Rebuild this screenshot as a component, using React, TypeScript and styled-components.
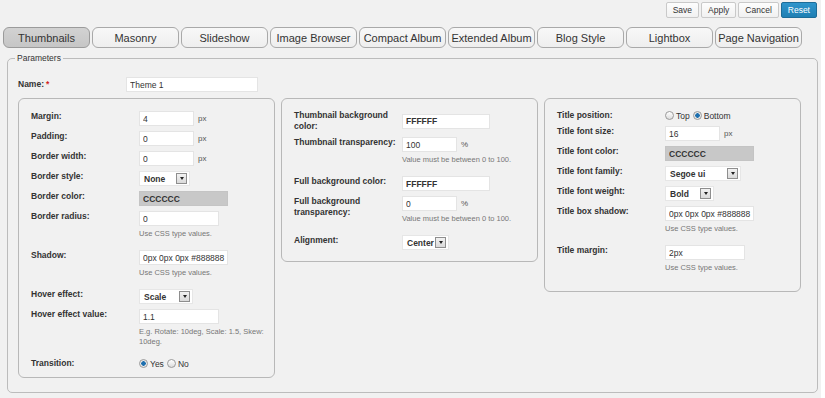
import React from 'react';
import styled, { createGlobalStyle } from 'styled-components';

const GlobalStyle = createGlobalStyle`
  body {
    margin: 0;
    background: #ffffff;
    font-family: "Liberation Sans", Arial, sans-serif;
  }
`;

const Page = styled.div`
  width: 821px;
  min-height: 398px;
  background: #f1f1f1;
  box-sizing: border-box;
  padding-top: 2px;
`;

const TopBar = styled.div`
  display: flex;
  justify-content: flex-end;
  gap: 2px;
  padding-right: 4px;
`;

const ActionButton = styled.button<{ $primary?: boolean }>`
  height: 16px;
  padding: 0 6px;
  font-family: "Liberation Sans", Arial, sans-serif;
  font-size: 8.5px;
  border-radius: 2px;
  color: ${(p) => (p.$primary ? '#ffffff' : '#333333')};
  border: 1px solid ${(p) => (p.$primary ? '#1c6c98' : '#c9c9c9')};
  background: ${(p) =>
    p.$primary ? 'linear-gradient(#2e95cc, #1f7fb3)' : 'linear-gradient(#fdfdfd, #f1f1f1)'};
`;

const TabRow = styled.div`
  display: flex;
  gap: 2px;
  padding-left: 3px;
  margin-top: 9px;
`;

const Tab = styled.div<{ $active?: boolean }>`
  width: 87px;
  height: 21px;
  box-sizing: border-box;
  display: flex;
  align-items: center;
  justify-content: center;
  font-size: 11px;
  color: #333333;
  white-space: nowrap;
  border: 1px solid ${(p) => (p.$active ? '#9b9b9b' : '#a9a9a9')};
  border-radius: 6px;
  background: ${(p) => (p.$active ? 'linear-gradient(#d2d2d2, #c6c6c6)' : 'linear-gradient(#f8f8f8, #eeeeee)')};
`;

const Params = styled.fieldset`
  margin: 5px 0 0 7px;
  width: 811px;
  box-sizing: border-box;
  border: 1px solid #bcbcbc;
  border-radius: 5px;
  padding: 14px 10px 14px 10px;
`;

const Legend = styled.legend`
  font-size: 8.5px;
  line-height: 10px;
  color: #333333;
  padding: 0 2px;
  margin-left: -3px;
`;

const NameRow = styled.div`
  display: grid;
  grid-template-columns: 108px auto;
  align-items: center;
`;

const Required = styled.span`
  color: #d21f1f;
  margin-left: 2px;
`;

const Panels = styled.div`
  display: flex;
  align-items: flex-start;
  gap: 6px;
  margin-top: 6px;
`;

const Panel = styled.div<{ $pad: string }>`
  width: 257px;
  box-sizing: border-box;
  border: 1px solid #b8b8b8;
  border-radius: 6px;
  padding: ${(p) => p.$pad};
  display: flex;
  flex-direction: column;
  gap: 5px;
`;

const Row = styled.div<{ $center?: boolean }>`
  display: grid;
  grid-template-columns: 108px auto;
  align-items: ${(p) => (p.$center ? 'center' : 'start')};
`;

const Label = styled.div`
  font-size: 8.5px;
  line-height: 11px;
  font-weight: bold;
  color: #333333;
`;

const Field = styled.div`
  display: flex;
  flex-direction: column;
  align-items: flex-start;
`;

const Inline = styled.div`
  display: flex;
  align-items: center;
  gap: 4px;
`;

const TextInput = styled.input<{ $w: number; $gray?: boolean; $bold?: boolean }>`
  width: ${(p) => p.$w}px;
  height: 15px;
  box-sizing: border-box;
  padding: 0 2px 0 3px;
  margin: 0;
  font-family: "Liberation Sans", Arial, sans-serif;
  font-size: 8.5px;
  font-weight: ${(p) => (p.$bold ? 'bold' : 'normal')};
  color: #333333;
  border: 1px solid ${(p) => (p.$gray ? '#c4c4c4' : '#e4e4e4')};
  background: ${(p) => (p.$gray ? '#c8c8c8' : '#ffffff')};
  outline: none;
`;

const Unit = styled.span`
  font-size: 8px;
  color: #555555;
`;

const Help = styled.div`
  font-size: 7.5px;
  line-height: 10px;
  color: #777777;
  white-space: nowrap;
  margin-top: 3px;
  margin-bottom: 6px;
`;

const SelectBox = styled.div<{ $w: number }>`
  width: ${(p) => p.$w}px;
  height: 15px;
  box-sizing: border-box;
  display: flex;
  align-items: center;
  justify-content: space-between;
  padding: 0 2px 0 4px;
  background: #ffffff;
  border: 1px solid #e6e6e6;
  font-size: 8.5px;
  font-weight: bold;
  color: #333333;
  white-space: nowrap;
`;

const SelectArrow = styled.span`
  flex: none;
  width: 11px;
  height: 11px;
  box-sizing: border-box;
  border: 1px solid #8e8e8e;
  background: linear-gradient(#f2f2f2, #dadada);
  display: flex;
  align-items: center;
  justify-content: center;
  &::after {
    content: '';
    border-left: 2.5px solid transparent;
    border-right: 2.5px solid transparent;
    border-top: 3px solid #222222;
  }
`;

const RadioGroup = styled.div`
  display: flex;
  align-items: center;
  height: 11px;
  gap: 3px;
  font-size: 8.5px;
  color: #333333;
`;

const RadioItem = styled.span`
  display: flex;
  align-items: center;
  gap: 2px;
`;

const RadioDot = styled.span<{ $checked?: boolean }>`
  width: 9px;
  height: 9px;
  box-sizing: border-box;
  border-radius: 50%;
  border: 1px solid #9a9a9a;
  background: ${(p) =>
    p.$checked
      ? 'radial-gradient(circle, #1d6fae 0, #1d6fae 2px, #e8e8e8 2.5px)'
      : 'linear-gradient(#ffffff, #dcdcdc)'};
`;

const Select = ({ value, w }: { value: string; w: number }) => (
  <SelectBox $w={w}>
    <span>{value}</span>
    <SelectArrow />
  </SelectBox>
);

const Radios = ({ options, checked }: { options: string[]; checked: string }) => (
  <RadioGroup>
    {options.map((o) => (
      <RadioItem key={o}>
        <RadioDot $checked={o === checked} />
        {o}
      </RadioItem>
    ))}
  </RadioGroup>
);

const tabs = [
  'Thumbnails',
  'Masonry',
  'Slideshow',
  'Image Browser',
  'Compact Album',
  'Extended Album',
  'Blog Style',
  'Lightbox',
  'Page Navigation',
];

const App = () => {
  return (
    <Page>
      <GlobalStyle />
      <TopBar>
        <ActionButton>Save</ActionButton>
        <ActionButton>Apply</ActionButton>
        <ActionButton>Cancel</ActionButton>
        <ActionButton $primary>Reset</ActionButton>
      </TopBar>
      <TabRow>
        {tabs.map((t, i) => (
          <Tab key={t} $active={i === 0}>
            {t}
          </Tab>
        ))}
      </TabRow>
      <Params>
        <Legend>Parameters</Legend>
        <NameRow>
          <Label>
            Name:<Required>*</Required>
          </Label>
          <TextInput $w={132} readOnly value="Theme 1" />
        </NameRow>
        <Panels>
          <Panel $pad="12px 12px 8px">
            <Row>
              <Label>Margin:</Label>
              <Inline>
                <TextInput $w={55} readOnly value="4" />
                <Unit>px</Unit>
              </Inline>
            </Row>
            <Row>
              <Label>Padding:</Label>
              <Inline>
                <TextInput $w={55} readOnly value="0" />
                <Unit>px</Unit>
              </Inline>
            </Row>
            <Row>
              <Label>Border width:</Label>
              <Inline>
                <TextInput $w={55} readOnly value="0" />
                <Unit>px</Unit>
              </Inline>
            </Row>
            <Row>
              <Label>Border style:</Label>
              <Select value="None" w={51} />
            </Row>
            <Row>
              <Label>Border color:</Label>
              <TextInput $w={89} $gray $bold readOnly value="CCCCCC" />
            </Row>
            <Row>
              <Label>Border radius:</Label>
              <Field>
                <TextInput $w={80} readOnly value="0" />
                <Help>Use CSS type values.</Help>
              </Field>
            </Row>
            <Row>
              <Label>Shadow:</Label>
              <Field>
                <TextInput $w={89} readOnly value="0px 0px 0px #888888" />
                <Help>Use CSS type values.</Help>
              </Field>
            </Row>
            <Row>
              <Label>Hover effect:</Label>
              <Select value="Scale" w={54} />
            </Row>
            <Row>
              <Label>Hover effect value:</Label>
              <Field>
                <TextInput $w={80} readOnly value="1.1" />
                <Help>
                  E.g. Rotate: 10deg, Scale: 1.5, Skew:
                  <br />
                  10deg.
                </Help>
              </Field>
            </Row>
            <Row>
              <Label>Transition:</Label>
              <Radios options={['Yes', 'No']} checked="Yes" />
            </Row>
          </Panel>

          <Panel $pad="11px 12px 11px">
            <Row $center>
              <Label>
                Thumbnail background
                <br />
                color:
              </Label>
              <TextInput $w={88} $bold readOnly value="FFFFFF" />
            </Row>
            <Row>
              <Label>Thumbnail transparency:</Label>
              <Field>
                <Inline>
                  <TextInput $w={55} readOnly value="100" />
                  <Unit>%</Unit>
                </Inline>
                <Help>Value must be between 0 to 100.</Help>
              </Field>
            </Row>
            <Row>
              <Label>Full background color:</Label>
              <TextInput $w={88} $bold readOnly value="FFFFFF" />
            </Row>
            <Row>
              <Label>
                Full background
                <br />
                transparency:
              </Label>
              <Field>
                <Inline>
                  <TextInput $w={55} readOnly value="0" />
                  <Unit>%</Unit>
                </Inline>
                <Help>Value must be between 0 to 100.</Help>
              </Field>
            </Row>
            <Row>
              <Label>Alignment:</Label>
              <Select value="Center" w={47} />
            </Row>
          </Panel>

          <Panel $pad="11px 12px 12px">
            <Row>
              <Label>Title position:</Label>
              <Radios options={['Top', 'Bottom']} checked="Bottom" />
            </Row>
            <Row>
              <Label>Title font size:</Label>
              <Inline>
                <TextInput $w={55} readOnly value="16" />
                <Unit>px</Unit>
              </Inline>
            </Row>
            <Row>
              <Label>Title font color:</Label>
              <TextInput $w={89} $gray $bold readOnly value="CCCCCC" />
            </Row>
            <Row>
              <Label>Title font family:</Label>
              <Select value="Segoe ui" w={76} />
            </Row>
            <Row>
              <Label>Title font weight:</Label>
              <Select value="Bold" w={49} />
            </Row>
            <Row>
              <Label>Title box shadow:</Label>
              <Field>
                <TextInput $w={89} readOnly value="0px 0px 0px #888888" />
                <Help>Use CSS type values.</Help>
              </Field>
            </Row>
            <Row>
              <Label>Title margin:</Label>
              <Field>
                <TextInput $w={80} readOnly value="2px" />
                <Help>Use CSS type values.</Help>
              </Field>
            </Row>
          </Panel>
        </Panels>
      </Params>
    </Page>
  );
};

export default App;
